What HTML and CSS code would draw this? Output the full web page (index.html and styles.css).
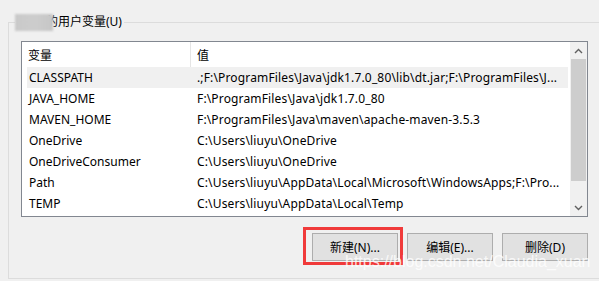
FILE: index.html
```html
<!DOCTYPE html>
<html lang="zh">
<head>
<meta charset="utf-8">
<link rel="stylesheet" href="styles.css">
</head>
<body>
<fieldset class="group">
  <legend class="group-title"><span class="masked"></span>的用户变量(U)</legend>
  <div class="listbox">
    <div class="list-main">
      <div class="list-head">
        <div class="hcol hcol-name">变量</div>
        <div class="hcol hcol-value">值</div>
      </div>
      <div class="rows">
        <div class="row selected"><span class="c-name">CLASSPATH</span><span class="c-value">.;F:\ProgramFiles\Java\jdk1.7.0_80\lib\dt.jar;F:\ProgramFiles\J...</span></div>
        <div class="row"><span class="c-name">JAVA_HOME</span><span class="c-value">F:\ProgramFiles\Java\jdk1.7.0_80</span></div>
        <div class="row"><span class="c-name">MAVEN_HOME</span><span class="c-value">F:\ProgramFiles\Java\maven\apache-maven-3.5.3</span></div>
        <div class="row"><span class="c-name">OneDrive</span><span class="c-value">C:\Users\liuyu\OneDrive</span></div>
        <div class="row"><span class="c-name">OneDriveConsumer</span><span class="c-value">C:\Users\liuyu\OneDrive</span></div>
        <div class="row"><span class="c-name">Path</span><span class="c-value">C:\Users\liuyu\AppData\Local\Microsoft\WindowsApps;F:\Pro...</span></div>
        <div class="row"><span class="c-name">TEMP</span><span class="c-value">C:\Users\liuyu\AppData\Local\Temp</span></div>
      </div>
    </div>
    <div class="scrollbar">
      <div class="sb-btn"><svg width="9" height="6" viewBox="0 0 9 6"><path d="M1 5 L4.5 1.5 L8 5" fill="none" stroke="#606060" stroke-width="1.4"/></svg></div>
      <div class="sb-track"><div class="sb-thumb"></div></div>
      <div class="sb-btn"><svg width="9" height="6" viewBox="0 0 9 6"><path d="M1 1 L4.5 4.5 L8 1" fill="none" stroke="#606060" stroke-width="1.4"/></svg></div>
    </div>
  </div>
  <div class="buttons">
    <button class="btn btn-new">新建(N)...</button>
    <button class="btn">编辑(E)...</button>
    <button class="btn">删除(D)</button>
  </div>
</fieldset>
<div class="watermark">https://blog.csdn.net/Claudia_xuan</div>
</body>
</html>
```

FILE: styles.css
```css
html, body {
  margin: 0;
  padding: 0;
  background: #f0f0f0;
  overflow: hidden;
}
body {
  width: 599px;
  height: 281px;
  position: relative;
  font-family: "Noto Sans", "Noto Sans CJK SC", sans-serif;
  font-size: 12px;
  color: #000;
}
.group {
  margin: 14px -20px 0 8px;
  padding: 11px 0 17px 12px;
  border: 1px solid #dcdcdc;
  min-width: 0;
}
.group-title {
  margin-left: -6px;
  padding: 0 2px 0 0;
  height: 16px;
  line-height: 16px;
  display: flex;
  align-items: center;
}
.masked {
  display: inline-block;
  width: 38px;
  height: 17px;
  margin-right: -7px;
  background: linear-gradient(90deg, #c9c9c9 0%, #cdcdcd 50%, #c6c6c6 100%);
  filter: blur(1.2px);
  position: relative;
  z-index: 1;
}
.listbox {
  width: 565px;
  height: 174px;
  border: 1px solid #828790;
  background: #fff;
  display: flex;
}
.list-main {
  width: 546px;
  display: flex;
  flex-direction: column;
}
.list-head {
  height: 25px;
  display: flex;
}
.hcol {
  display: flex;
  align-items: center;
  padding-left: 6px;
}
.hcol-name {
  width: 162px;
  border-right: 1px solid #e5e5e5;
}
.hcol-value {
  flex: 1;
}
.rows {
  padding-left: 5px;
}
.row {
  height: 21px;
  display: flex;
  align-items: center;
  white-space: nowrap;
}
.row.selected {
  background: #f0f0f0;
}
.c-name {
  width: 161px;
  padding-left: 2px;
  flex: none;
}
.c-value {
  padding-left: 7px;
  letter-spacing: 0.15px;
}
.scrollbar {
  margin-left: 2px;
  width: 17px;
  background: #f0f0f0;
  display: flex;
  flex-direction: column;
}
.sb-btn {
  height: 17px;
  display: flex;
  align-items: center;
  justify-content: center;
}
.sb-track {
  flex: 1;
  display: flex;
  flex-direction: column;
}
.sb-thumb {
  height: 122px;
  margin: 0 1px;
  background: #cdcdcd;
}
.buttons {
  margin-top: 16px;
  width: 567px;
  display: flex;
  justify-content: flex-end;
  gap: 9px;
}
.btn {
  width: 86px;
  height: 28px;
  background: #e1e1e1;
  border: 1px solid #adadad;
  font-family: "Noto Sans", "Noto Sans CJK SC", sans-serif;
  font-size: 12px;
  color: #000;
  padding: 0;
  margin: 0;
}
.btn-new {
  position: relative;
}
.btn-new::after {
  content: "";
  position: absolute;
  left: -10px;
  top: -7px;
  width: 94px;
  height: 32px;
  border: 3px solid #f03a3a;
}
.watermark {
  position: absolute;
  left: 345px;
  top: 253px;
  font-family: "Liberation Sans", Arial, sans-serif;
  font-size: 16px;
  color: rgba(255, 255, 255, 0.8);
  white-space: nowrap;
}
```
